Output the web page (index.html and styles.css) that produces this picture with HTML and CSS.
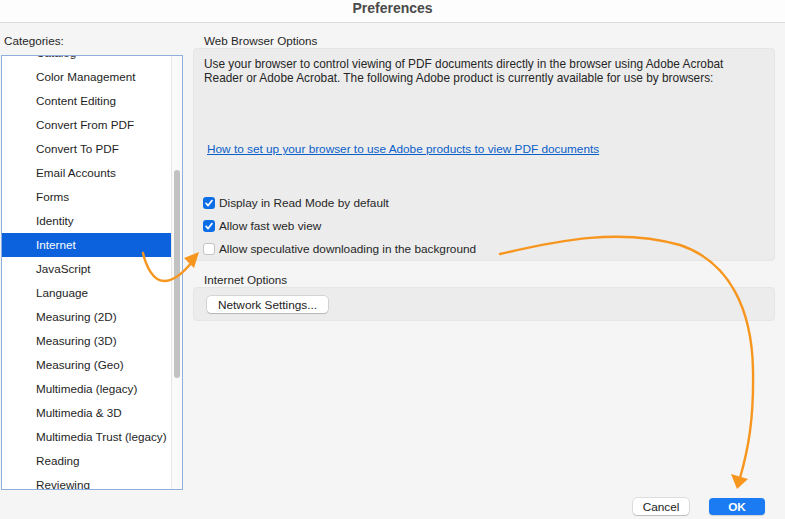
FILE: index.html
```html
<!DOCTYPE html>
<html>
<head>
  <meta charset="UTF-8">
  <title>Preferences</title>
  <link rel="stylesheet" href="styles.css">
</head>
<body>
  <div class="window">
    <div class="titlebar">Preferences</div>

    <div class="content">
      <div class="categories">
        <div class="label">Categories:</div>
        <div class="listbox">
          <ul class="items">
            <li>Catalog</li>
            <li>Color Management</li>
            <li>Content Editing</li>
            <li>Convert From PDF</li>
            <li>Convert To PDF</li>
            <li>Email Accounts</li>
            <li>Forms</li>
            <li>Identity</li>
            <li class="selected">Internet</li>
            <li>JavaScript</li>
            <li>Language</li>
            <li>Measuring (2D)</li>
            <li>Measuring (3D)</li>
            <li>Measuring (Geo)</li>
            <li>Multimedia (legacy)</li>
            <li>Multimedia &amp; 3D</li>
            <li>Multimedia Trust (legacy)</li>
            <li>Reading</li>
            <li>Reviewing</li>
            <li>Search</li>
          </ul>
          <div class="scrolltrack"><div class="thumb"></div></div>
        </div>
      </div>

      <div class="options">
        <div class="label">Web Browser Options</div>
        <div class="group web">
          <p>Use your browser to control viewing of PDF documents directly in the browser using Adobe Acrobat<br>Reader or Adobe Acrobat. The following Adobe product is currently available for use by browsers:</p>
          <a class="help-link" href="#">How to set up your browser to use Adobe products to view PDF documents</a>
          <div class="checks">
            <label class="check"><span class="box on"><svg viewBox="0 0 12 12" width="12" height="12"><path d="M3 6.3 L5.1 8.6 L9 3.6" fill="none" stroke="#fff" stroke-width="1.7" stroke-linecap="round" stroke-linejoin="round"/></svg></span>Display in Read Mode by default</label>
            <label class="check"><span class="box on"><svg viewBox="0 0 12 12" width="12" height="12"><path d="M3 6.3 L5.1 8.6 L9 3.6" fill="none" stroke="#fff" stroke-width="1.7" stroke-linecap="round" stroke-linejoin="round"/></svg></span>Allow fast web view</label>
            <label class="check"><span class="box"></span>Allow speculative downloading in the background</label>
          </div>
        </div>

        <div class="label second">Internet Options</div>
        <div class="group net">
          <button class="btn">Network Settings...</button>
        </div>
      </div>
    </div>

    <div class="footer">
      <button class="btn">Cancel</button>
      <button class="btn primary">OK</button>
    </div>

    <!-- hand-drawn annotation arrows -->
    <svg class="arrows" width="785" height="519" viewBox="0 0 785 519">
      <g fill="none" stroke="#f7961f" stroke-width="2.4" stroke-linecap="round">
        <path d="M143 253 C146 266 153 281 164 281 C175 281 184 272 192 262"/>
        <path d="M500 254 C560 240 620 228 680 245 C730 262 752 310 753 370 C754 420 748 450 740 478"/>
      </g>
      <g fill="#f7961f">
        <polygon points="184,258 199,252 194,268"/>
        <polygon points="731,474 748,479 737,489"/>
      </g>
    </svg>
  </div>
</body>
</html>
```

FILE: styles.css
```css
body {
  margin: 0;
  background-color: #f5f5f5;
  font-family: "Liberation Sans", Arial, sans-serif;
  font-size: 11.7px;
  color: #262626;
}

.window {
  position: relative;
  width: 785px;
  height: 519px;
  overflow: hidden;
}

.titlebar {
  height: 22px;
  line-height: 16px;
  text-align: center;
  font-size: 14px;
  font-weight: bold;
  color: #4a4a4a;
  background-color: #fdfdfd;
  border-bottom: 1px solid #dadada;
}

.content {
  display: flex;
  gap: 10px;
  padding-top: 11px;
  height: 456px;
}

.label {
  line-height: 14px;
  padding-left: 4px;
}

.categories {
  width: 183px;
}

.listbox {
  display: flex;
  height: 433px;
  margin-top: 7px;
  margin-left: 1px;
  background-color: #fff;
  border: 1px solid #8fb0dc;
  overflow: hidden;
}

.items {
  list-style: none;
  margin: -15px 0 0 0;
  padding: 0;
  width: 169px;
}

.items li {
  height: 24px;
  line-height: 24px;
  padding-left: 34px;
  white-space: nowrap;
  color: #1e1e1e;
}

.items li.selected {
  background-color: #0b62dc;
  color: #fff;
}

.scrolltrack {
  flex: 1;
  border-left: 1px solid #e6e6e6;
  background-color: #fafafa;
}

.thumb {
  width: 6px;
  height: 208px;
  margin: 114px auto 0 auto;
  border-radius: 3px;
  background-color: #c2c2c2;
}

.options {
  width: 582px;
}

.options .label {
  padding-left: 11px;
}

.options .label.second {
  margin-top: 12px;
}

.group {
  background-color: #ececec;
  border: 1px solid #e5e5e5;
  border-radius: 4px;
}

.web {
  padding: 8px 10px 0 10px;
  box-sizing: border-box;
  height: 213px;
}

.web p {
  margin: 0;
  font-size: 11.85px;
  line-height: 14px;
  white-space: nowrap;
}

.help-link {
  display: inline-block;
  margin-top: 57px;
  margin-left: 3px;
  font-size: 11.8px;
  line-height: 14px;
  color: #0a5fc9;
}

.checks {
  margin-top: 35px;
}

.check {
  display: flex;
  align-items: center;
  height: 23px;
  gap: 4px;
  margin-left: -1px;
  font-size: 11.8px;
}

.box {
  display: inline-flex;
  width: 12px;
  height: 12px;
  box-sizing: border-box;
  border: 1px solid #c4c4c4;
  border-radius: 3px;
  background-color: #fff;
}

.box.on {
  border: none;
  background-color: #0c6ee6;
}

.net {
  height: 34px;
  box-sizing: border-box;
  padding: 8px 13px;
}

.btn {
  font-family: "Liberation Sans", Arial, sans-serif;
  font-size: 11.8px;
  height: 17px;
  padding: 0 11px;
  border: none;
  border-radius: 4px;
  background-color: #fff;
  color: #222;
  box-shadow: 0 0 0 0.5px rgba(0, 0, 0, 0.2), 0 1px 1px rgba(0, 0, 0, 0.15);
  cursor: pointer;
}

.footer {
  display: flex;
  justify-content: flex-end;
  gap: 20px;
  padding: 8px 20px 0 0;
}

.footer .btn {
  width: 56px;
  padding: 0;
}

.btn.primary {
  background-color: #1a7bf2;
  color: #fff;
  font-weight: bold;
  box-shadow: 0 1px 1px rgba(0, 0, 0, 0.15);
}

.arrows {
  position: absolute;
  top: 0;
  left: 0;
  pointer-events: none;
}
```
